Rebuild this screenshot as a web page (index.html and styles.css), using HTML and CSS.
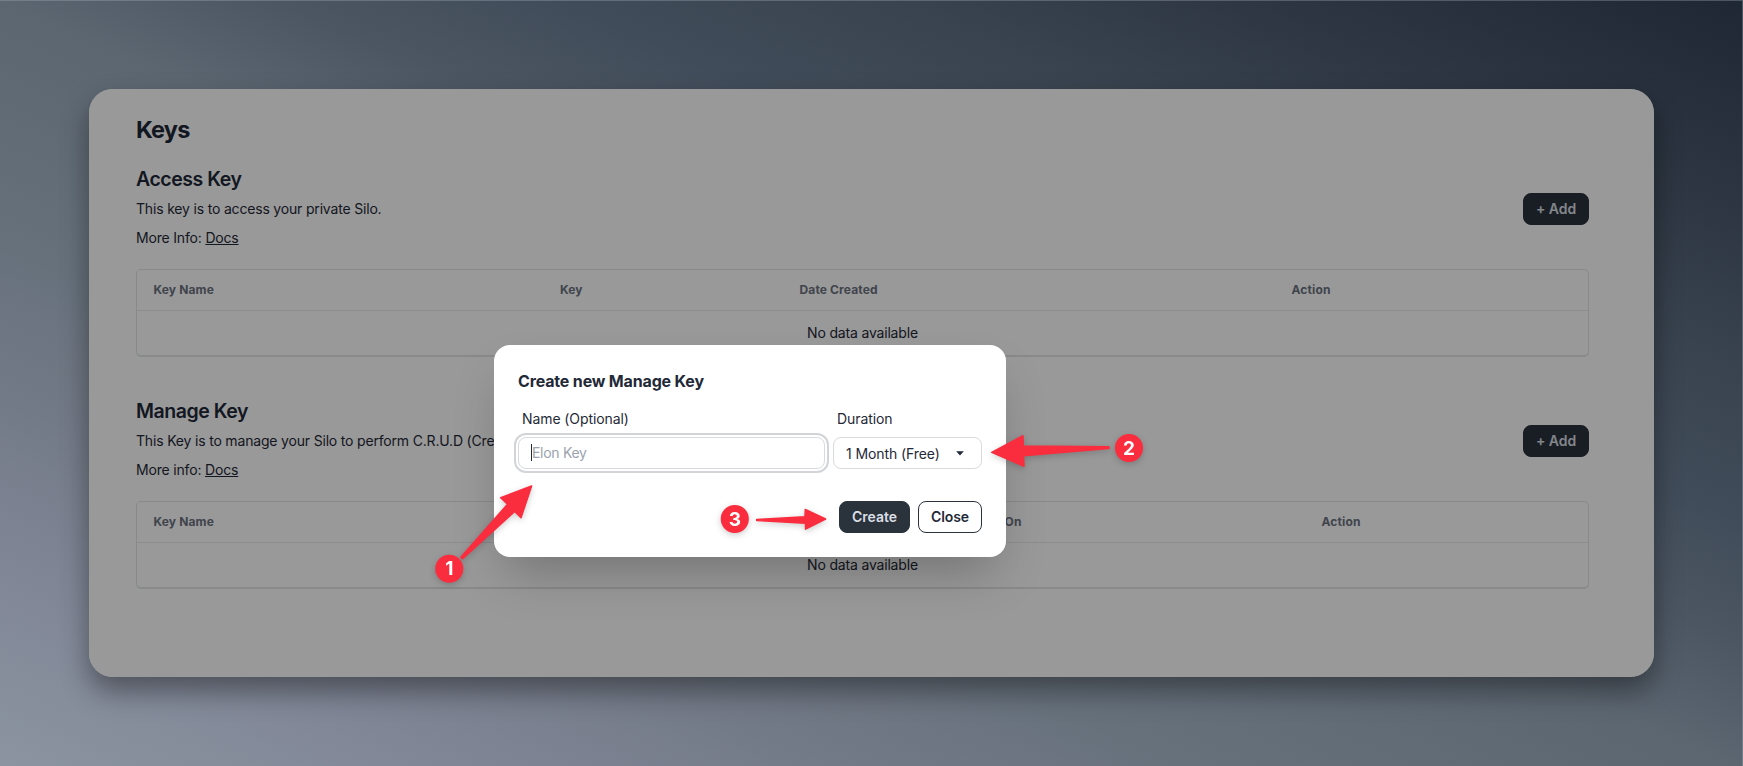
FILE: index.html
```html
<!DOCTYPE html>
<html lang="en">
<head>
<meta charset="utf-8">
<title>Keys</title>
<link rel="stylesheet" href="styles.css">
</head>
<body>
<main class="page">
  <h1 class="page-title">Keys</h1>
  <section class="block">
    <div class="block-head">
      <div>
        <h2 class="block-title">Access Key</h2>
        <p class="line">This key is to access your private Silo.</p>
        <p class="line">More Info: <a class="link">Docs</a></p>
      </div>
      <button class="btn add">+ Add</button>
    </div>
    <div class="table">
      <div class="row head access"><span>Key Name</span><span>Key</span><span>Date Created</span><span>Action</span></div>
      <div class="row empty">No data available</div>
    </div>
  </section>
  <section class="block">
    <div class="block-head">
      <div>
        <h2 class="block-title">Manage Key</h2>
        <p class="line">This Key is to manage your Silo to perform C.R.U.D (Create)</p>
        <p class="line">More info: <a class="link">Docs</a></p>
      </div>
      <button class="btn add">+ Add</button>
    </div>
    <div class="table">
      <div class="row head manage"><span>Key Name</span><span>On</span><span>Action</span></div>
      <div class="row empty">No data available</div>
    </div>
  </section>
  <div class="overlay">
    <div class="modal">
      <h3 class="modal-title">Create new Manage Key</h3>
      <div class="fields">
        <div class="field name">
          <label class="label">Name (Optional)</label>
          <div class="input"><span class="caret"></span><span class="placeholder">Elon Key</span></div>
        </div>
        <div class="field duration">
          <label class="label">Duration</label>
          <div class="select"><span>1 Month (Free)</span><svg width="8" height="5" viewBox="0 0 8 5"><path d="M.2.3h7.6L4 4.6z" fill="#1f2937"/></svg></div>
        </div>
      </div>
      <div class="actions">
        <button class="btn create">Create</button>
        <button class="btn close">Close</button>
      </div>
    </div>
  </div>
</main>
<svg class="marks" width="1743" height="766" viewBox="0 0 1743 766">
  <g fill="#fa2d3f" stroke="#fa2d3f" stroke-width="1.5" stroke-linejoin="round">
    <path d="M531.6 486 500.7 497.8 507.5 504.3 460.8 557.3 462.7 558.8 514.7 511.4 521 517.8z"/>
    <path d="M991.7 452.3 1023 435.7 1023.3 446 1109 446.7V448.5L1023.5 455.7 1024 466.3z"/>
    <path d="M756.7 519.6 804.9 516.8 805.3 509.5 825.6 519 805.6 529.2 805.4 523.3 756.7 520.6z"/>
    <circle cx="449.3" cy="568.7" r="13.3"/>
    <circle cx="1129" cy="448" r="13.3"/>
    <circle cx="734.8" cy="519" r="13.3"/>
  </g>
  <g class="mark-text">
    <text x="449.3" y="575.3">1</text>
    <text x="1129" y="454.6">2</text>
    <text x="734.8" y="525.6">3</text>
  </g>
</svg>
</body>
</html>
```

FILE: styles.css
```css
* { box-sizing: border-box; }
body {
  margin: 0;
  width: 1743px;
  height: 766px;
  padding: 88px;
  overflow: hidden;
  position: relative;
  border: solid rgba(160,175,185,.35);
  border-width: 1px 1px 0 0;
  font-family: Inter, "Liberation Sans", sans-serif;
  font-size: 14px;
  letter-spacing: -.18px;
  color: #1f2937;
  background: linear-gradient(to top right,
    #8b94a0 0%, #808696 13%, #737a87 24%, #67717c 34%, #5c6671 50%,
    #4c5662 58%, #414c5a 66%, #39434f 76%, #2e3743 85%, #1f2734 100%) border-box;
}
h1, h2, h3, p { margin: 0; }
.page {
  position: relative;
  width: 1565px;
  height: 588px;
  margin-left: 1px;
  padding: 25px 65px 0 47px;
  border-radius: 24px;
  background: #fff;
  box-shadow: 0 14px 28px rgba(0,0,0,.4);
}
.page-title { font-size: 23.5px; line-height: 32px; font-weight: 700; letter-spacing: -.85px; }
.block { margin-top: 19px; height: 213px; }
.block-head { display: flex; justify-content: space-between; align-items: flex-start; height: 87px; }
.block-title { font-size: 19.5px; line-height: 28px; font-weight: 600; letter-spacing: -.46px; }
.line { line-height: 20px; margin-top: 7px; height: 22px; }
.block-title + .line { margin-top: 6px; }
.link { text-decoration: underline; }
.btn {
  height: 32px;
  border: 1px solid #2a323c;
  border-radius: 8px;
  padding: 0 0 1px;
  font: 600 14px Inter, sans-serif;
  letter-spacing: -.05px;
  white-space: nowrap;
  background: #2a323c;
  color: #dbdfe5;
}
.add { width: 66px; margin-top: 28px; }
.table {
  height: 88px;
  margin-top: 17px;
  border: 1px solid #e3e5e8;
  border-bottom-width: 2px;
  border-radius: 5px;
}
.row { display: grid; align-items: center; }
.head { height: 41px; padding: 0 0 2px 16.5px; border-bottom: 1px solid #ececee; font-size: 12px; font-weight: 700; letter-spacing: .14px; color: #6b7280; }
.access { grid-template-columns: 406.5px 239.5px 492px 1fr; }
.manage { grid-template-columns: 851px 317px 1fr; }
.empty { height: 44px; padding-bottom: 2px; justify-items: center; }
.overlay {
  position: absolute;
  inset: 0;
  padding: 256px 0 0 405px;
  border-radius: 24px;
  background: rgba(0,0,0,.4);
}
.modal {
  width: 512px;
  height: 212px;
  padding: 24px;
  border-radius: 16px;
  background: #fff;
  box-shadow: 0 25px 50px -12px rgba(0,0,0,.25);
}
.modal-title { font-size: 16px; line-height: 24px; font-weight: 700; letter-spacing: -.16px; }
.fields { display: flex; gap: 8px; margin-top: 16px; letter-spacing: -.09px; }
.name { width: 307px; }
.duration { width: 149px; }
.label { display: block; line-height: 20px; padding-left: 4px; }
.input, .select {
  display: flex;
  align-items: center;
  height: 32px;
  margin-top: 8px;
  border: 1px solid #d8dadd;
  border-radius: 8px;
  padding: 0 12px 1px;
}
.input { outline: 2px solid #d2d4d7; outline-offset: 2px; color: #9ca3af; letter-spacing: -.3px; }
.caret { width: 1px; height: 17px; background: #1f2937; }
.select { justify-content: space-between; padding: 1px 17px 0 12px; }
.actions { display: flex; justify-content: flex-end; gap: 8px; margin-top: 32px; }
.create { width: 71px; }
.close { width: 64px; background: #fff; color: #1f2937; }
.marks { position: absolute; left: 0; top: -1px; filter: drop-shadow(0 2px 3px rgba(0,0,0,.2)); }
.mark-text { fill: #fff; font: 700 19px Inter, sans-serif; letter-spacing: 0; text-anchor: middle; }
```
